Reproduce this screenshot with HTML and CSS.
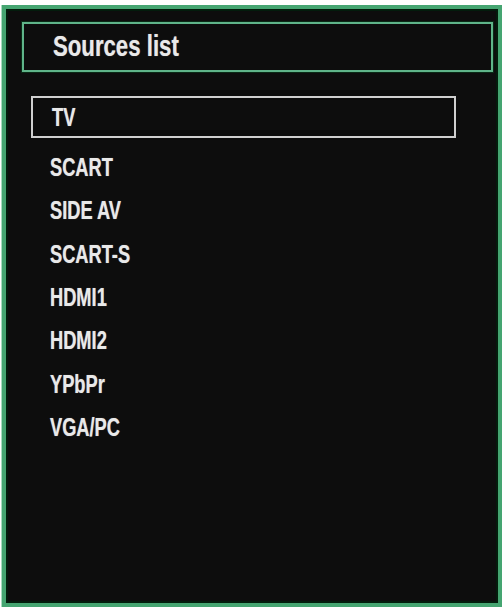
FILE: index.html
```html
<!DOCTYPE html>
<html>
<head>
<meta charset="utf-8">
<link rel="stylesheet" href="styles.css">
</head>
<body>
<div class="frame">
  <div class="title-box"><span class="label title">Sources list</span></div>
  <ul class="sources">
    <li class="item selected"><span class="label">TV</span></li>
    <li class="item"><span class="label">SCART</span></li>
    <li class="item"><span class="label">SIDE AV</span></li>
    <li class="item"><span class="label">SCART-S</span></li>
    <li class="item"><span class="label">HDMI1</span></li>
    <li class="item"><span class="label">HDMI2</span></li>
    <li class="item"><span class="label">YPbPr</span></li>
    <li class="item"><span class="label">VGA/PC</span></li>
  </ul>
</div>
</body>
</html>
```

FILE: styles.css
```css
html, body {
  margin: 0;
  padding: 0;
  background: #ffffff;
}

body {
  width: 504px;
  height: 609px;
  overflow: hidden;
  font-family: "Liberation Sans", Arial, sans-serif;
}

.frame {
  box-sizing: border-box;
  margin: 5px 2px 0 2px;
  width: 500px;
  height: 602px;
  border: 4px solid #45a571;
  box-shadow: inset 0 0 0 2px #031c0c, -1px 0 0 #a9dcc0;
  background: #0d0d0d;
  padding: 13px 5px 0 16px;
}

.title-box {
  box-sizing: border-box;
  height: 50px;
  border: 2px solid #5fb489;
  box-shadow: 0 0 0 1px #0a2a16;
  display: flex;
  align-items: center;
  padding-left: 29px;
  padding-bottom: 2px;
}

.label {
  display: inline-block;
  color: #e9e9e9;
  font-weight: bold;
  font-size: 25px;
  transform: scaleX(0.73);
  transform-origin: left center;
  text-shadow: 0 0 1px rgba(255,255,255,0.5);
  white-space: nowrap;
}

.title {
  font-size: 29px;
  transform: scaleX(0.765);
}

.sources {
  list-style: none;
  margin: 24px 0 0 0;
  padding: 0;
}

.item {
  box-sizing: border-box;
  height: 43.3px;
  display: flex;
  align-items: center;
  padding-left: 28px;
}

.item.selected {
  width: 425px;
  height: 42px;
  margin-left: 9px;
  padding-left: 19px;
  border: 2px solid #cfcfcf;
  margin-bottom: 8px;
}
```
